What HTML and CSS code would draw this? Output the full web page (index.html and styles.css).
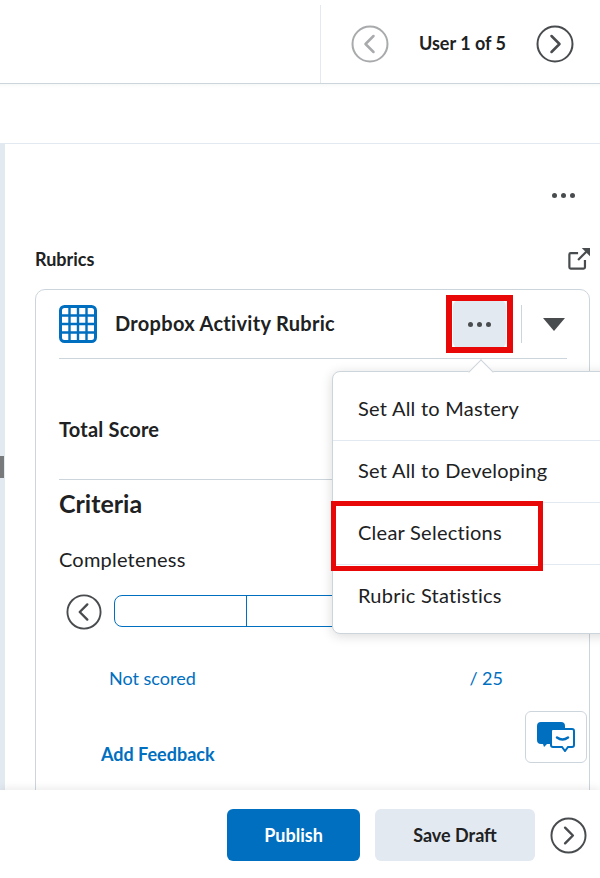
FILE: index.html
```html
<!DOCTYPE html>
<html lang="en">
<head>
    <meta charset="UTF-8">
    <meta name="viewport" content="width=device-width, initial-scale=1.0">
    <link rel="stylesheet" href="styles.css">
    <title>Rubrics</title>
</head>
<body>
    <div class="page">
        <header class="topbar">
            <div class="pager">
                <svg class="circle-btn faded" viewBox="0 0 38 38"><circle cx="19" cy="19" r="17.5"/><path d="M22.5 11 L14.5 19 L22.5 27"/></svg>
                <span class="pager-label">User 1 of 5</span>
                <svg class="circle-btn" viewBox="0 0 38 38"><circle cx="19" cy="19" r="17.5"/><path d="M15.5 11 L23.5 19 L15.5 27"/></svg>
            </div>
        </header>
        <div class="band"></div>

        <main class="panel">
            <div class="panel-actions">
                <div class="dots"><i></i><i></i><i></i></div>
            </div>
            <div class="rubrics-head">
                <h3>Rubrics</h3>
                <svg class="popout" viewBox="0 0 24 24"><path class="thin" d="M11 5.500 H3 Q1.500 5.500 1.500 7 V21 Q1.500 22.500 3 22.500 H17 Q18.500 22.500 18.500 21 V13"/><path class="thin" d="M11 13 L20 4"/><path class="solid" d="M15 0 H24 V9 Z"/></svg>
            </div>

            <section class="card">
                <div class="card-head">
                    <svg class="grid-icon" viewBox="0 0 38 38">
                        <rect x="1.500" y="1.500" width="35" height="35" rx="4"/>
                        <path d="M10.500 2 V36 M19 2 V36 M27.500 2 V36 M2 10.500 H36 M2 19 H36 M2 27.500 H36"/>
                    </svg>
                    <h2 class="card-title">Dropbox Activity Rubric</h2>
                    <button class="more-btn"><span class="dots"><i></i><i></i><i></i></span></button>
                    <span class="head-sep"></span>
                    <span class="caret"></span>
                </div>

                <div class="total-row">Total Score</div>
                <h2 class="criteria">Criteria</h2>
                <div class="criterion">Completeness</div>
                <div class="levels">
                    <svg class="circle-btn small" viewBox="0 0 38 38"><circle cx="19" cy="19" r="17.500"/><path d="M22.500 11 L14.500 19 L22.500 27"/></svg>
                    <div class="level-table"><span></span><span></span></div>
                </div>
                <div class="score-row">
                    <a class="link">Not scored</a>
                    <a class="link">/ 25</a>
                </div>
                <div class="feedback-row">
                    <a class="link strong">Add Feedback</a>
                    <button class="chat-btn">
                        <svg viewBox="0 0 38 30">
                            <path class="chat-back" d="M4 0 H24 Q28 0 28 4 V8 H14 V22 H10 L7 25 L6 22 H4 Q0 22 0 18 V4 Q0 0 4 0 Z"/>
                            <path class="chat-front" d="M16 7 H35 Q37 7 37 9 V23 Q37 25 35 25 H31 L28 29 L25 25 H16 Q14 25 14 23 V9 Q14 7 16 7 Z"/>
                            <path class="chat-smile" d="M20 15.500 Q25.500 19.500 31 15.500"/>
                        </svg>
                    </button>
                </div>
                <div class="card-line"></div>
            </section>
        </main>

        <footer class="footer">
            <button class="btn primary">Publish</button>
            <button class="btn secondary">Save Draft</button>
            <svg class="circle-btn" viewBox="0 0 38 38"><circle cx="19" cy="19" r="17.500"/><path d="M15.500 11 L23.500 19 L15.500 27"/></svg>
        </footer>

        <!-- grip on the panel splitter -->
        <div class="handle"></div>

        <!-- dropdown opened from the ... button -->
        <div class="menu">
            <span class="menu-arrow"></span>
            <div class="menu-item">Set All to Mastery</div>
            <div class="menu-item">Set All to Developing</div>
            <div class="menu-item">Clear Selections</div>
            <div class="menu-item">Rubric Statistics</div>
        </div>

        <!-- red annotation boxes -->
        <div class="mark mark-more"></div>
        <div class="mark mark-clear"></div>
    </div>
</body>
</html>
```

FILE: styles.css
```css
* {
    box-sizing: border-box;
}

body {
    margin: 0;
    font-family: 'Lato', sans-serif;
    color: #202122;
    background-color: #fff;
}

h2, h3 {
    margin: 0;
}

.page {
    position: relative;
    width: 600px;
    height: 878px;
    overflow: hidden;
    display: flex;
    flex-direction: column;
}

.topbar {
    height: 84px;
    flex: none;
    display: flex;
    justify-content: flex-end;
    padding-top: 5px;
    border-bottom: 1px solid #cdd5dc;
}

.pager {
    width: 280px;
    border-left: 1px solid #e3e9f1;
    display: flex;
    align-items: center;
    padding: 0 26px 0 30px;
    justify-content: space-between;
}

.pager-label {
    font-size: 18px;
    font-weight: 700;
    color: #202122;
    margin-top: -2px;
}

.circle-btn {
    width: 38px;
    height: 38px;
    flex: none;
    fill: none;
    stroke: #494c4e;
    stroke-width: 2;
}

.circle-btn path {
    stroke-width: 2.500;
    stroke-linecap: round;
    stroke-linejoin: round;
}

.circle-btn.faded {
    stroke: #a8aaac;
}

.circle-btn.small {
    width: 36px;
    height: 36px;
}

.band {
    height: 60px;
    flex: none;
    border-bottom: 1px solid #e3e9f1;
    background: linear-gradient(#f7f8f9, #fff 4px);
}

.panel {
    height: 646px;
    flex: none;
    overflow: hidden;
    border-left: 5px solid #e3e9f1;
    padding: 0 10px 0 30px;
}

.handle {
    position: absolute;
    left: 0;
    top: 456px;
    width: 4px;
    height: 22px;
    background-color: #77797b;
}

.panel-actions {
    height: 103px;
    padding: 49px 15px 0 0;
    display: flex;
    justify-content: flex-end;
}

.dots {
    display: flex;
    gap: 4px;
}

.dots i {
    width: 5px;
    height: 5px;
    border-radius: 50%;
    background-color: #494c4e;
}

.rubrics-head {
    display: flex;
    justify-content: space-between;
    align-items: center;
    height: 26px;
    margin-bottom: 16px;
}

.rubrics-head h3 {
    font-size: 18px;
    font-weight: 700;
    color: #202122;
    margin-top: -2px;
}

.popout {
    width: 22px;
    height: 22px;
    margin-top: -3px;
}

.popout .thin {
    fill: none;
    stroke: #494c4e;
    stroke-width: 2.400;
}

.popout .solid {
    fill: #494c4e;
}

.card {
    height: 560px;
    border: 1px solid #cdd5dc;
    border-radius: 10px;
    padding: 0 22px 0 23px;
}

.card-head {
    height: 69px;
    display: flex;
    align-items: center;
    border-bottom: 1px solid #cdd5dc;
}

.grid-icon {
    width: 38px;
    height: 38px;
    flex: none;
    fill: none;
    stroke: #006fbf;
    stroke-width: 2.400;
}

.grid-icon rect {
    stroke-width: 3;
}

.card-title {
    font-size: 20px;
    font-weight: 700;
    letter-spacing: 0.3px;
    color: #202122;
    margin-left: 18px;
    flex: 1;
    margin-top: -2px;
}

.more-btn {
    width: 53px;
    height: 48px;
    border: none;
    border-radius: 6px;
    background-color: #e3e9f1;
    display: flex;
    align-items: center;
    justify-content: center;
    padding: 0;
    margin-right: 15px;
}

.head-sep {
    width: 1px;
    height: 38px;
    background-color: #cdd5dc;
    margin-right: 21px;
}

.caret {
    width: 0;
    height: 0;
    border-left: 11px solid transparent;
    border-right: 11px solid transparent;
    border-top: 13px solid #494c4e;
    margin-right: 2px;
}

.total-row {
    height: 121px;
    padding-top: 20px;
    display: flex;
    align-items: center;
    font-size: 20px;
    letter-spacing: 0.2px;
    font-weight: 700;
    border-bottom: 1px solid #cdd5dc;
}

.criteria {
    font-size: 25px;
    font-weight: 700;
    line-height: 30px;
    margin-top: 8px;
}

.criterion {
    font-size: 20px;
    letter-spacing: 0.2px;
    line-height: 24px;
    margin-top: 29px;
}

.levels {
    display: flex;
    align-items: flex-start;
    margin-top: 23px;
    padding-left: 7px;
    gap: 12px;
}

.level-table {
    display: flex;
    width: 400px;
    height: 32px;
    margin-top: 1px;
    border: 1px solid #006fbf;
    border-radius: 8px 0 0 8px;
}

.level-table span {
    width: 132px;
    border-right: 1px solid #006fbf;
}

.score-row {
    display: flex;
    justify-content: space-between;
    padding: 0 64px 0 50px;
    margin-top: 36px;
    font-size: 18px;
    line-height: 24px;
}

.link {
    color: #006fbf;
}

.link.strong {
    font-weight: 700;
}

.feedback-row {
    display: flex;
    justify-content: space-between;
    padding-left: 42px;
    margin-right: -20px;
    margin-top: 21px;
    font-size: 18px;
}

.feedback-row .link {
    margin-top: 31px;
    line-height: 24px;
}

.chat-btn {
    width: 62px;
    height: 52px;
    background-color: #fff;
    border: 1px solid #cdd5dc;
    border-radius: 6px;
    padding: 0;
    display: flex;
    align-items: center;
    justify-content: center;
}

.chat-btn svg {
    width: 38px;
    height: 30px;
}

.chat-back {
    fill: #006fbf;
}

.chat-front {
    fill: #fff;
    stroke: #006fbf;
    stroke-width: 2;
}

.chat-smile {
    fill: none;
    stroke: #006fbf;
    stroke-width: 2.500;
    stroke-linecap: round;
}

.card-line {
    border-top: 2px solid #c4c8cc;
    margin-top: 25px;
}

.footer {
    position: relative;
    flex: 1;
    display: flex;
    align-items: center;
    justify-content: flex-end;
    padding: 2px 13px 0 0;
    gap: 15px;
    background-color: #fff;
    box-shadow: 0 -2px 8px rgba(0, 0, 0, 0.08);
}

.footer .circle-btn {
    width: 37px;
    height: 37px;
}

.btn {
    height: 52px;
    border: none;
    border-radius: 6px;
    font-family: 'Lato', sans-serif;
    font-size: 18px;
    font-weight: 700;
    padding: 0;
}

.btn.primary {
    width: 133px;
    background-color: #006fbf;
    color: #fff;
}

.btn.secondary {
    width: 160px;
    background-color: #e3e9f1;
    color: #202122;
}

.menu {
    position: absolute;
    left: 332px;
    top: 371px;
    width: 290px;
    height: 263px;
    background-color: #fff;
    border: 1px solid #cdd5dc;
    border-radius: 8px;
    box-shadow: 0 2px 12px rgba(0, 0, 0, 0.15);
}

.menu-arrow {
    position: absolute;
    left: 139px;
    top: -9px;
    width: 18px;
    height: 18px;
    background-color: #fff;
    border-left: 1px solid #cdd5dc;
    border-top: 1px solid #cdd5dc;
    transform: rotate(45deg);
}

.menu-item {
    position: relative;
    height: 62px;
    padding-left: 25px;
    font-size: 20px;
    letter-spacing: 0.25px;
    line-height: 58px;
    color: #202122;
    border-bottom: 1px solid #e3e9f1;
}

.menu-item:first-of-type {
    height: 69px;
    line-height: 72px;
}

.menu-item:last-child {
    border-bottom: none;
    line-height: 60px;
}

.mark {
    position: absolute;
    border-style: solid;
    border-color: #e80808;
}

.mark-more {
    left: 446px;
    top: 295px;
    width: 67px;
    height: 58px;
    border-width: 6px;
}

.mark-clear {
    left: 331px;
    top: 501px;
    width: 212px;
    height: 70px;
    border-width: 5px;
}
```
